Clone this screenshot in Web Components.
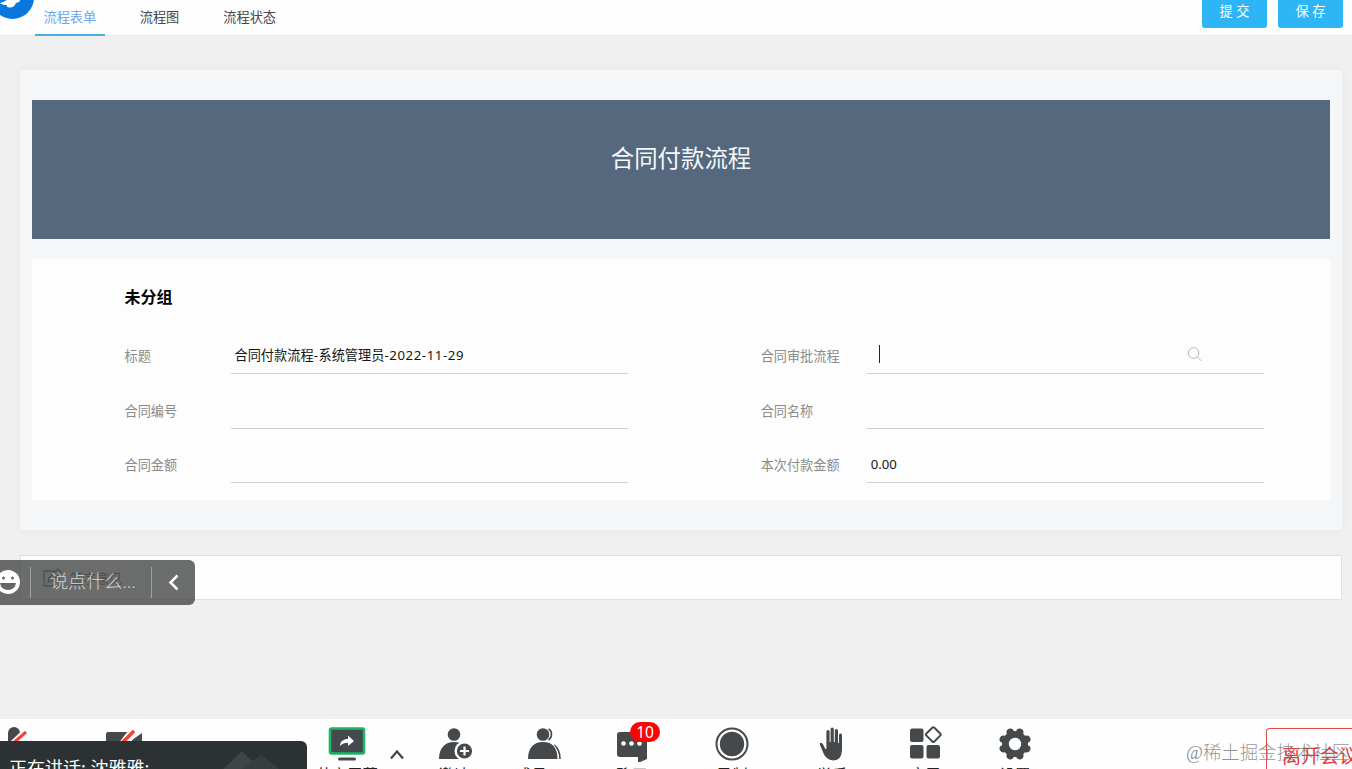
<!DOCTYPE html>
<html lang="zh-CN">
<head>
<meta charset="utf-8">
<title>合同付款流程</title>
<style>
	html, body { margin: 0; height: 100%; overflow: hidden; }
	body { font: 13px/20px "Noto Sans", "Noto Sans CJK SC", sans-serif; }
</style>
</head>
<body>
<flow-page>
	<top-bar slot="header">
		<tab-item active>流程表单</tab-item>
		<tab-item>流程图</tab-item>
		<tab-item>流程状态</tab-item>
		<action-button slot="actions">提 交</action-button>
		<action-button slot="actions">保 存</action-button>
	</top-bar>
	<form-card heading="合同付款流程" group="未分组">
		<form-field label="标题">合同付款流程<span>-</span>系统管理员<span>-2022-11-29</span></form-field>
		<form-field label="合同审批流程" search></form-field>
		<form-field label="合同编号"></form-field>
		<form-field label="合同名称"></form-field>
		<form-field label="合同金额"></form-field>
		<form-field label="本次付款金额">0.00</form-field>
	</form-card>
	<opinion-strip>签字意见</opinion-strip>
	<comment-bar slot="overlay">说点什么...</comment-bar>
	<meeting-bar slot="footer">
		<meeting-tool icon="mic"></meeting-tool>
		<meeting-tool icon="camera"></meeting-tool>
		<span></span>
		<meeting-tool icon="share">共享屏幕</meeting-tool>
		<meeting-tool icon="caret"></meeting-tool>
		<meeting-tool icon="invite">邀请</meeting-tool>
		<meeting-tool icon="members">成员(19)</meeting-tool>
		<meeting-tool icon="chat" badge="10">聊天</meeting-tool>
		<meeting-tool icon="record">录制</meeting-tool>
		<meeting-tool icon="hand">举手</meeting-tool>
		<meeting-tool icon="apps">应用</meeting-tool>
		<meeting-tool icon="settings">设置</meeting-tool>
		<span></span>
		<leave-button>离开会议</leave-button>
	</meeting-bar>
	<speaker-toast slot="overlay">正在讲话: 沈雅雅;</speaker-toast>
	<water-mark slot="overlay">@稀土掘金技术社区</water-mark>
</flow-page>

<script>
const define = (name, styles, template) => {
	customElements.define(name, class extends HTMLElement {
		connectedCallback() {
			if (this.shadowRoot) return
			this.attachShadow({ mode: 'open' }).innerHTML = `<style>${styles}</style>${template(this)}`
		}
	})
}

// toolbar icons share a 40x36 canvas
const icons = {
	mic: `<rect x="11" y="1" width="12" height="24" rx="6"/><path d="M13 20 28 6" stroke="#fff" stroke-width="6"/><path d="M13 20 29 6" stroke="#f0433a" stroke-width="3"/>`,
	camera: `<rect x="2" y="6" width="24" height="22" rx="3"/><path d="m28 14 10-7v18l-10-6z"/><path d="M14 21 31 5" stroke="#fff" stroke-width="9"/><path d="M2 28V9q0-3 3-3h18L12 21z"/><path d="M17 18 29 6" stroke="#f0433a" stroke-width="3.600" stroke-linecap="round"/>`,
	share: `<rect x="3" y="2.500" width="34" height="25" rx="1.500" stroke="#19b765" stroke-width="2.600"/><path d="M13 20c.3-5 3.500-7 8-7V9.500l6 5.500-6 5v-3.200c-3.500-.1-5.500.8-8 3.200z" fill="#fff"/><rect x="11" y="31.500" width="18" height="3" rx="1.500"/>`,
	caret: `<path d="m14 32.500 6-7 6 7" fill="none" stroke="#45494b" stroke-width="2.200"/>`,
	invite: `<circle cx="20" cy="8.500" r="6.300"/><path d="M5 33c0-11 6-17 15-17s14 5 15 17z"/><circle cx="30" cy="25" r="9.500" fill="#fff"/><circle cx="30.500" cy="25" r="7.600"/><path d="M30.500 20.500v9M26 25h9" stroke="#fff" stroke-width="2.200"/>`,
	members: `<circle cx="18" cy="8.500" r="6.300"/><path d="M3 33c0-11 5.500-17 15-17s15 6 15 17z"/><path d="M23.500 3c4 2 4 8.500 0 11M29 19c4 3 6 8 6 14" fill="none" stroke="#45494b" stroke-width="1.600"/><path d="M27.500 18c4 4 5.500 9 5.500 15" fill="none" stroke="#fff"/>`,
	chat: `<path d="M8 6h24q3 0 3 3v24l-9 4v-6H8q-3 0-3-3V9q0-3 3-3z"/><g fill="#fff"><circle cx="11.500" cy="17.500" r="2.300"/><circle cx="19.500" cy="17.500" r="2.300"/><circle cx="27.500" cy="17.500" r="2.300"/></g>`,
	record: `<circle cx="20" cy="18" r="15.500" fill="#fff" stroke="#45494b" stroke-width="2"/><circle cx="20" cy="18" r="12.200"/>`,
	hand: `<path d="M11 25 8.500 19q-.8-2.300 1.200-2.200 1.400.2 2.200 2.200l2 4h1V5.500a1.600 1.600 0 0 1 3.200 0V16h1V3a1.600 1.600 0 0 1 3.200 0v13h1V4.500a1.600 1.600 0 0 1 3.200 0V17h1V9a1.500 1.500 0 0 1 3 0v15.500Q30 34 22 34.500q-8-.2-11-9.500z" transform="translate(-.5)"/>`,
	apps: `<rect x="5" y="2.500" width="13.500" height="13.500" rx="2"/><rect x="5" y="19" width="13.500" height="13.500" rx="2"/><rect x="21.500" y="19" width="13.500" height="13.500" rx="2"/><rect x="22.700" y="3" width="11.200" height="11.200" rx="1.500" transform="rotate(45 28.300 8.600)" fill="#fff" stroke="#45494b" stroke-width="2"/>`,
	settings: `<g stroke="#45494b" stroke-width="7.500" stroke-linecap="round"><path d="m15.300 6.300 9.400 23.400M24.700 6.300l-9.400 23.400M8.300 13.300l23.400 9.400M8.300 22.700l23.400-9.400"/></g><circle cx="20" cy="18" r="13"/><circle cx="20" cy="18" r="6.200" fill="#fff"/>`,
}

define('flow-page', `
	:host { display: flex; flex-direction: column; height: 769px; background: #f0f0f0; position: relative; overflow: hidden; }
	main { flex: 1; padding: 33px 9px 0 19px; }
`, () => `<slot name="header"></slot><main><slot></slot></main><slot name="footer"></slot><slot name="overlay"></slot>`)

define('top-bar', `
	:host { display: flex; height: 35px; background: #fefefe; border-bottom: 1px solid #e9e9e9; box-sizing: content-box; }
	svg { width: 35px; height: 35px; display: block; }
	nav { display: flex; flex: 1; gap: 26px; }
	.actions { display: flex; gap: 11px; padding-right: 9px; }
`, () => `
	<svg viewBox="0 0 35 35"><circle cx="12.500" cy="-2.500" r="21.500" fill="#0878df"/><path d="M0 3q5-1 8-4h12q1 3-4 4-2 5-7 4.500-3-.5-2-2.500-5 0-7-2z" fill="#fff"/></svg>
	<nav><slot></slot></nav>
	<div class="actions"><slot name="actions"></slot></div>`)

define('tab-item', `
	:host { display: block; height: 34px; padding: 0 9px; font-size: 13.200px; line-height: 35px; color: #484848; }
	:host([active]) { color: #6fa6e8; border-bottom: 2px solid #46afe3; padding: 0 8.500px; }
`, () => `<slot></slot>`)

define('action-button', `
	:host { display: block; width: 65px; height: 28px; border-radius: 0 0 3px 3px; background: #2db5f5; color: #fff; text-align: center; font-size: 13.200px; line-height: 23px; }
`, () => `<slot></slot>`)

define('form-card', `
	:host { display: block; height: 462px; padding: 30px 12px 0; box-sizing: border-box; border: 1px solid #ebedee; border-radius: 3px; background: #f4f6f8; box-shadow: 0 0 8px rgba(0,0,0,.04); }
	header { height: 139px; background: #56687e; color: #f4f8fc; font-size: 23.400px; line-height: 116px; text-align: center; }
	section { margin-top: 20px; height: 241px; background: #fdfdfd; padding: 26px 66px 0 92.500px; box-sizing: border-box; }
	h3 { margin: 0; font-size: 16px; line-height: 24px; color: #000; }
	.grid { display: grid; grid-template-columns: 503px 503px; grid-auto-rows: 54.600px; column-gap: 133.200px; margin-top: 10.400px; }
`, (el) => `
	<header>${el.getAttribute('heading')}</header>
	<section><h3>${el.getAttribute('group')}</h3><div class="grid"><slot></slot></div></section>`)

define('form-field', `
	:host { display: flex; align-items: flex-end; }
	label { width: 106px; padding-bottom: 8px; color: #8b8b8b; font-size: 13.150px; }
	.value { display: flex; flex: 1; height: 37px; box-sizing: border-box; padding: 0 4px; border-bottom: 1px solid #cfcfcf; color: #151515; font-size: 13.200px; line-height: 37px; }
	.caret { width: 1px; height: 18px; margin: 8px 307px 0 8px; background: #222; }
	svg { width: 15px; height: 15px; margin-top: 10px; }
	::slotted(span) { letter-spacing: .6px; }
`, (el) => `
	<label>${el.getAttribute('label')}</label>
	<div class="value"><slot></slot>${el.hasAttribute('search') ? `
		<span class="caret"></span>
		<svg viewBox="0 0 15 15" fill="none" stroke="#b5b5b5"><circle cx="6.500" cy="6" r="5.300"/><path d="m10.500 10 4 4"/></svg>` : ''}
	</div>`)

define('opinion-strip', `
	:host { display: flex; align-items: center; gap: 8px; height: 43px; margin: 24px 1px 0; padding: 0 0 0 21px; border: 1px solid #e0e0e0; background: #fefefe; color: #888; font-size: 13px; }
	svg { width: 20px; height: 20px; }
`, () => `<svg viewBox="0 0 20 20" fill="none" stroke="#888" stroke-width="1.300"><path d="M13 3H2v15h15V9M6 14l1-4L16 1l3 3-9 9z"/></svg><slot></slot>`)

define('comment-bar', `
	:host { position: absolute; left: 0; top: 560px; width: 195px; height: 45px; display: flex; align-items: center; background: rgba(60,63,62,.76); border-radius: 0 6px 6px 0; color: #d5d5d5; font-size: 18.100px; line-height: 43px; }
	.face { width: 20px; height: 26px; margin: 0 10px 2px 0; }
	i { width: 1px; height: 31px; background: #a0a2a2; }
	.text { width: 101px; padding-left: 19px; white-space: nowrap; font-weight: 300; padding-bottom: 2px; }
	.arrow { width: 43px; height: 20px; margin-bottom: 2px; }
`, () => `
	<svg class="face" viewBox="0 0 20 26"><circle cx="8" cy="13" r="12" fill="#fff"/><circle cx="3.500" cy="9" r="1.500" fill="#666"/><circle cx="12.500" cy="9" r="1.500" fill="#666"/><path d="M0 14h16q-1 7-8 7t-8-7z" fill="#666"/></svg>
	<i></i><span class="text"><slot></slot></span><i></i>
	<svg class="arrow" viewBox="0 0 43 20" fill="none" stroke="#fff" stroke-width="2.500"><path d="m25.500 3.500-7 7 7 7"/></svg>`)

define('meeting-bar', `
	:host { display: grid; grid-template-columns: 34px 180px 93px 80px 20px 94px 88px 86px 114px 86px 100px 80px 1fr 86px; height: 50px; background: #fefefe; overflow: hidden; }
`, () => `<slot></slot>`)

define('meeting-tool', `
	:host { display: flex; flex-direction: column; align-items: center; gap: 3px; padding-top: 7px; color: #222; font-size: 15.500px; line-height: 20px; white-space: nowrap; }
	.icon { position: relative; width: 40px; height: 36px; }
	svg { display: block; width: 40px; height: 36px; fill: #45494b; }
	b { position: absolute; left: 18px; top: -4px; width: 30px; height: 20px; border-radius: 10px; background: #f90505; color: #fff; font-size: 15.500px; font-weight: 400; text-align: center; }
`, (el) => `
	<div class="icon"><svg viewBox="0 0 40 36">${icons[el.getAttribute('icon')]}</svg>${el.hasAttribute('badge') ? `<b>${el.getAttribute('badge')}</b>` : ''}</div>
	<slot></slot>`)

define('leave-button', `
	:host { display: block; margin-top: 9px; height: 60px; padding-left: 15px; border: 1px solid #df4a4a; border-radius: 4px 0 0 0; border-right: 0; color: #e03c3c; font-size: 19px; line-height: 54px; white-space: nowrap; }
`, () => `<slot></slot>`)

define('speaker-toast', `
	:host { position: absolute; left: 0; bottom: 0; width: 298px; height: 28px; padding-left: 9px; display: flex; justify-content: space-between; overflow: hidden; background: #2c3133; border-radius: 0 6px 0 0; color: #fff; font-size: 18px; line-height: 54px; white-space: nowrap; }
	svg { width: 90px; height: 28px; }
`, () => `<slot></slot><svg viewBox="0 0 90 28"><path d="m0 34 25-24 25 24z" fill="#3f4446"/><path d="m25 28 19-14 26 20z" fill="#383d3f"/></svg>`)

define('water-mark', `
	:host { position: absolute; left: 1186px; top: 741px; color: rgba(110,110,110,.75); font: 300 18.400px/24px "Liberation Serif", "Noto Sans CJK SC", serif; white-space: nowrap; }
`, () => `<slot></slot>`)
</script>
</body>
</html>
